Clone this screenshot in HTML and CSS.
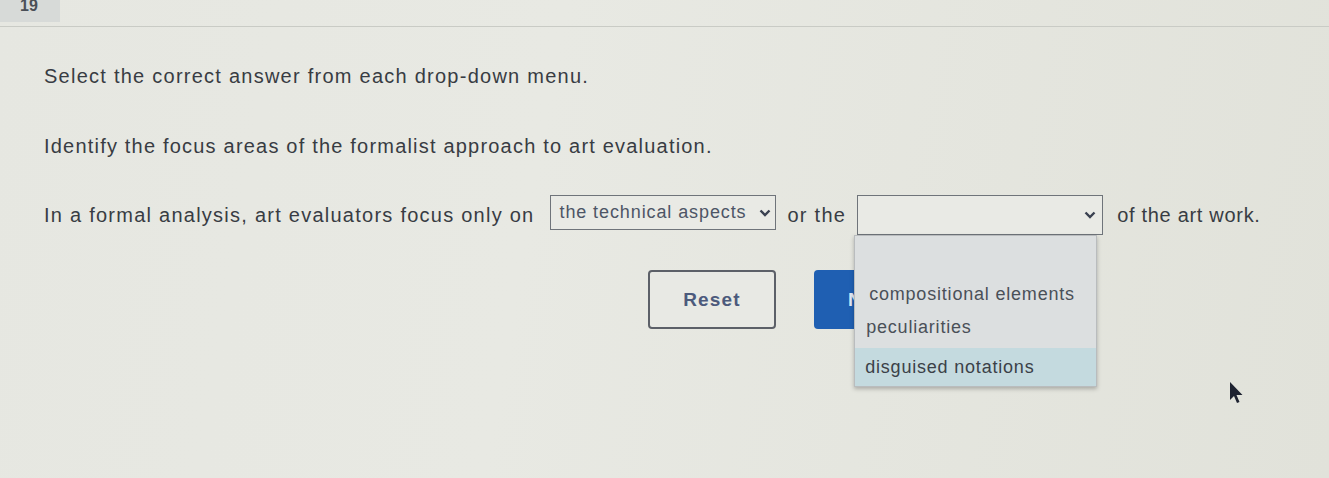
FILE: index.html
```html
<!DOCTYPE html>
<html lang="en">
<head>
    <meta charset="UTF-8">
    <meta name="viewport" content="width=device-width, initial-scale=1.0">
    <title>Question 19</title>
    <link rel="stylesheet" href="styles.css">
</head>
<body>
    <div class="topo">
        <div class="topo_num">19</div>
    </div>

    <div class="questao">
        <p class="questao_instrucao">Select the correct answer from each drop-down menu.</p>
        <p class="questao_enunciado">Identify the focus areas of the formalist approach to art evaluation.</p>

        <div class="questao_linha">
            <span>In a formal analysis, art evaluators focus only on</span>
            <div class="escolha escolha-um">
                <span class="escolha_texto">the technical aspects</span>
                <svg class="escolha_seta" width="12" height="8" viewBox="0 0 12 8"><path d="M1.5 1.5 L6 6 L10.5 1.5" fill="none" stroke="#3a4150" stroke-width="2.4"/></svg>
            </div>
            <span>or the</span>
            <div class="escolha escolha-dois">
                <span class="escolha_texto"></span>
                <svg class="escolha_seta" width="12" height="8" viewBox="0 0 12 8"><path d="M1.5 1.5 L6 6 L10.5 1.5" fill="none" stroke="#3a4150" stroke-width="2.4"/></svg>
                <ul class="lista">
                    <li class="lista_item"></li>
                    <li class="lista_item">compositional elements</li>
                    <li class="lista_item">peculiarities</li>
                    <li class="lista_item lista_item-ativo">disguised notations</li>
                </ul>
            </div>
            <span class="questao_fim">of the art work.</span>
        </div>

        <div class="botoes">
            <button class="botao botao-reset">Reset</button>
            <button class="botao botao-next"><span class="botao_texto">N</span></button>
        </div>
    </div>

    <svg class="cursor" width="16" height="24" viewBox="0 0 16 24"><path d="M2 1 L2 19 L6 15 L9 22 L11.5 21 L8.5 14 L14.5 14 Z" fill="#1d2230"/></svg>
</body>
</html>
```

FILE: styles.css
```css
*{border: 0;margin: 0;padding: 0;box-sizing: border-box;}
body{
    width: 1329px;
    height: 478px;
    overflow: hidden;
    position: relative;
    background: linear-gradient(100deg, #e6e7e1 0%, #e8e9e3 40%, #e1e2da 100%);
    font-family: 'Liberation Sans', Arial, sans-serif;
    color: #383c43;
}
.topo{
    height: 27px;
    border-bottom: 1px solid #c9cbc5;
}
.topo_num{
    width: 60px;
    height: 22px;
    background: #d7dad8;
    color: #4a4f57;
    font-weight: bold;
    font-size: 16px;
    line-height: 12px;
    padding-left: 20px;
    overflow: hidden;
}
.questao{
    padding: 37px 0 0 44px;
    font-size: 20px;
    letter-spacing: 1.25px;
}
.questao_instrucao{
    height: 24px;
    line-height: 24px;
}
.questao_enunciado{
    line-height: 24px;
    margin-top: 46px;
    letter-spacing: 1.2px;
}
.questao_linha{
    display: flex;
    align-items: center;
    margin-top: 37px;
    height: 40px;
}
.questao_fim{
    letter-spacing: 0.7px;
}
.escolha{
    position: relative;
    display: flex;
    align-items: center;
    justify-content: space-between;
    border: 1px solid #6f747a;
    background: #e9eae5;
    height: 35px;
    padding: 0 4px 0 9px;
    letter-spacing: 0;
}
.escolha-um{
    align-self: flex-start;
    width: 226px;
    margin: 0 12px 0 15px;
    font-size: 18px;
    letter-spacing: 0.9px;
    color: #4d5566;
}
.escolha-dois{
    width: 246px;
    height: 40px;
    margin: 0 14px 0 11px;
    padding-right: 6px;
}
.escolha_seta{
    flex-shrink: 0;
}
.lista{
    position: absolute;
    top: 39px;
    left: -4px;
    width: 243px;
    list-style: none;
    background: #dcdfe0;
    border: 1px solid #b9bcbe;
    box-shadow: 0 2px 4px rgba(0, 0, 0, 0.25);
    font-size: 18px;
    letter-spacing: 0.8px;
    color: #4a5058;
    z-index: 2;
}
.lista_item{
    height: 38px;
    line-height: 38px;
    padding-left: 12px;
}
.lista_item:first-child{
    height: 41px;
}
.lista_item:nth-child(2){
    height: 35px;
    line-height: 35px;
    padding-left: 14px;
}
.lista_item:nth-child(3){
    height: 36px;
    line-height: 30px;
    padding-left: 11px;
}
.lista_item-ativo{
    background: #c4dadf;
    color: #3b4148;
    padding-left: 10px;
}
.botoes{
    display: flex;
    gap: 38px;
    margin: 35px 0 0 604px;
    letter-spacing: 0;
}
.botao{
    height: 59px;
    font-family: 'Liberation Sans', Arial, sans-serif;
    font-weight: bold;
    font-size: 19px;
    border-radius: 4px;
}
.botao-reset{
    width: 128px;
    background: #e8e9e4;
    border: 2px solid #5c6068;
    color: #4c5a7c;
    letter-spacing: 1.2px;
}
.botao-next{
    width: 128px;
    background: #1f5fb2;
    color: #dfe8f5;
    text-align: left;
    padding-left: 34px;
}
.cursor{
    position: absolute;
    left: 1228px;
    top: 381px;
}
```
